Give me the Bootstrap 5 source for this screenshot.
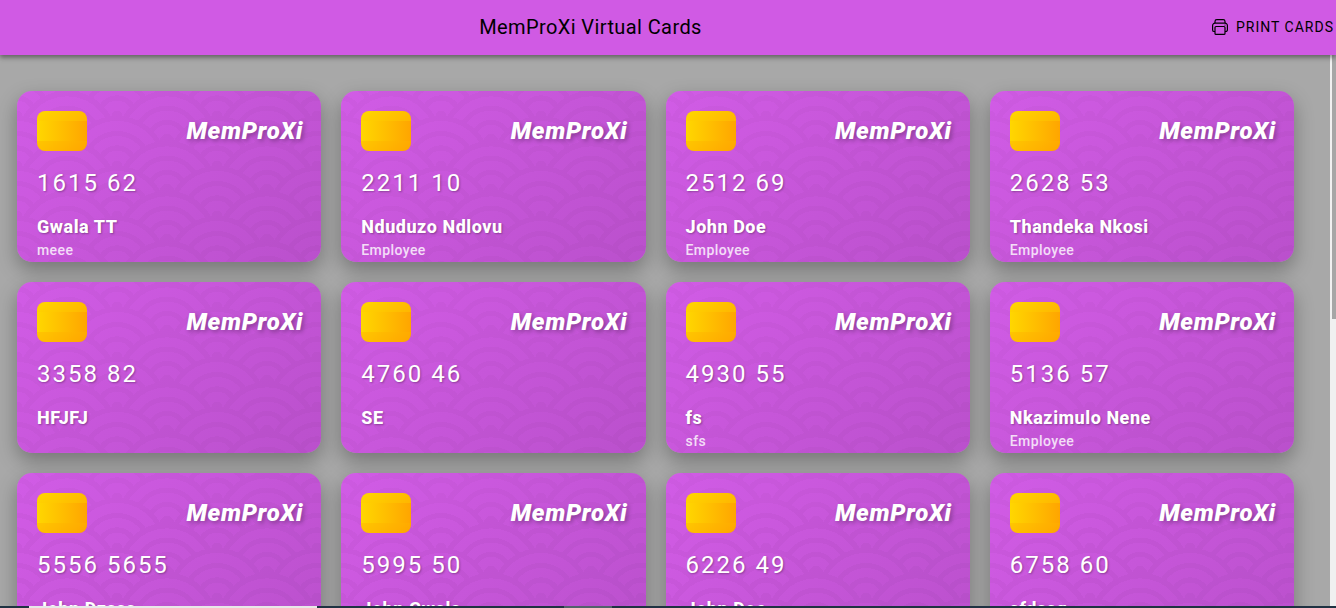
<!DOCTYPE html>
<html lang="en">
<head>
<meta charset="utf-8">
<meta name="viewport" content="width=device-width, initial-scale=1">
<title>MemProXi Virtual Cards</title>
<link href="https://cdn.jsdelivr.net/npm/bootstrap@5.3.0/dist/css/bootstrap.min.css" rel="stylesheet">
<style>
body { font-family: Roboto, "Liberation Sans", sans-serif; background: #a8a8a8; color: #000; }
.topbar { height: 55px; padding-bottom: 2px; background: #d05ae4; box-shadow: 0 2px 4px rgba(0,0,0,.3), 0 4px 5px rgba(0,0,0,.14); z-index: 2; }
.topbar h1 { font-size: 20px; line-height: 28px; font-weight: 400; letter-spacing: .02em; padding-right: 155px; }
.print-btn { font-size: 14px; line-height: 20px; letter-spacing: 1px; right: 2px; }
.deck { padding: 36px 36px 0 17px; }
.deck-grid { display: grid; grid-template-columns: repeat(4, minmax(0, 1fr)); gap: 20px; }
.member { height: 171px; border-radius: 15px; padding: 20px; color: #fff; overflow: hidden; z-index: 0;
  background: linear-gradient(135deg, #d25ce6, #ba50cc); }
.member-wrap { border-radius: 15px; box-shadow: 0 8px 20px rgba(0,0,0,.3); }
.member::before { content: ""; position: absolute; inset: 0; z-index: -1; opacity: .02;
  --b: #d05ae4; --l: #000;
  background-image:
    radial-gradient(circle at 100% 150%, var(--b) 24%, var(--l) 24%, var(--l) 28%, var(--b) 28%, var(--b) 36%, var(--l) 36%, var(--l) 40%, transparent 40%),
    radial-gradient(circle at 0 150%, var(--b) 24%, var(--l) 24%, var(--l) 28%, var(--b) 28%, var(--b) 36%, var(--l) 36%, var(--l) 40%, transparent 40%),
    radial-gradient(circle at 50% 100%, var(--l) 10%, var(--b) 10%, var(--b) 23%, var(--l) 23%, var(--l) 30%, var(--b) 30%, var(--b) 43%, var(--l) 43%, var(--l) 50%, var(--b) 50%, var(--b) 63%, var(--l) 63%, var(--l) 71%, transparent 71%),
    radial-gradient(circle at 100% 50%, var(--l) 5%, var(--b) 5%, var(--b) 15%, var(--l) 15%, var(--l) 20%, var(--b) 20%, var(--b) 29%, var(--l) 29%, var(--l) 34%, var(--b) 34%, var(--b) 44%, var(--l) 44%, var(--l) 49%, transparent 49%),
    radial-gradient(circle at 0 50%, var(--l) 5%, var(--b) 5%, var(--b) 15%, var(--l) 15%, var(--l) 20%, var(--b) 20%, var(--b) 29%, var(--l) 29%, var(--l) 34%, var(--b) 34%, var(--b) 44%, var(--l) 44%, var(--l) 49%, transparent 49%);
  background-size: 100px 50px; }
.chip { width: 50px; height: 40px; border-radius: 8px;
  background: linear-gradient(90deg, #ffd700, #ffa500) 0 10px / 100% 20px no-repeat, linear-gradient(135deg, #ffd700, #ffa500); }
.brand-name { font-size: 24px; line-height: 40px; font-weight: 900; font-style: italic; letter-spacing: .03em; text-shadow: 2px 2px 4px rgba(0,0,0,.3); margin-right: -2px; }
.number { font-size: 24px; line-height: 28px; letter-spacing: 2px; margin-top: 18px; text-shadow: 1px 1px 2px rgba(0,0,0,.3); }
.holder { font-size: 18px; line-height: 24px; font-weight: 800; letter-spacing: .03em; margin-top: 18px; text-shadow: 1px 1px 2px rgba(0,0,0,.3); }
.role { font-size: 14px; line-height: 20px; font-weight: 500; letter-spacing: .03em; opacity: .8; margin-top: 1px; }
.track { width: 6px; background: #f0f0f0; padding-left: 2px; }
.thumb { height: 48%; background: #a6a6a6; }
.dock { height: 2px; background: #1f3242; }
.dock-window { width: 288px; margin-left: 29px; background: #e8e8e8; }
.dock-tab { width: 48px; margin-left: 247px; background: #52616b; }
</style>
</head>
<body class="vh-100 d-flex flex-column overflow-hidden">
<header class="topbar position-relative flex-shrink-0 d-flex align-items-center justify-content-center">
  <h1 class="m-0">MemProXi Virtual Cards</h1>
  <button type="button" class="print-btn position-absolute btn border-0 p-0 text-black d-flex align-items-center gap-2">
    <svg width="16" height="16" viewBox="0 0 16 16" fill="none" stroke="#000" stroke-width="1.2" stroke-linejoin="round" aria-hidden="true">
      <path d="M3 12.500H2.200A1.600 1.600 0 0 1 .6 10.900V6.500A2.400 2.400 0 0 1 3 4.100h10a2.400 2.400 0 0 1 2.400 2.400v4.400a1.600 1.600 0 0 1-1.600 1.600H13"/>
      <path d="M3 4.100V2.400A1.800 1.800 0 0 1 4.800.6h6.400A1.800 1.800 0 0 1 13 2.400v1.700"/>
      <rect x="3" y="7.500" width="10" height="7.900" rx="1"/>
      <circle cx="13" cy="6" r=".6" fill="#000" stroke="none"/>
    </svg>
    PRINT CARDS
  </button>
</header>
<div class="d-flex flex-grow-1 overflow-hidden">
  <main class="deck flex-grow-1">
    <div class="deck-grid" id="cards"></div>
  </main>
  <div class="track" aria-hidden="true"><div class="thumb"></div></div>
</div>
<footer class="dock d-flex flex-shrink-0"><div class="dock-window"></div><div class="dock-tab"></div></footer>
<script src="https://cdn.jsdelivr.net/npm/bootstrap@5.3.0/dist/js/bootstrap.bundle.min.js"></script>
<script>
const members = [
  ["1615 62", "Gwala TT", "meee"],
  ["2211 10", "Nduduzo Ndlovu", "Employee"],
  ["2512 69", "John Doe", "Employee"],
  ["2628 53", "Thandeka Nkosi", "Employee"],
  ["3358 82", "HFJFJ", ""],
  ["4760 46", "SE", ""],
  ["4930 55", "fs", "sfs"],
  ["5136 57", "Nkazimulo Nene", "Employee"],
  ["5556 5655", "John Dzsss", ""],
  ["5995 50", "John Gwala", ""],
  ["6226 49", "John Doe", ""],
  ["6758 60", "sfdssg", ""]
];
document.getElementById("cards").innerHTML = members.map(([number, name, role]) => `
  <article class="member-wrap"><div class="member position-relative">
    <div class="d-flex justify-content-between">
      <div class="chip"></div>
      <div class="brand-name">MemProXi</div>
    </div>
    <div class="number">${number}</div>
    <div class="holder">${name}</div>
    <div class="role">${role}</div>
  </div></article>`).join("");
</script>
</body>
</html>
